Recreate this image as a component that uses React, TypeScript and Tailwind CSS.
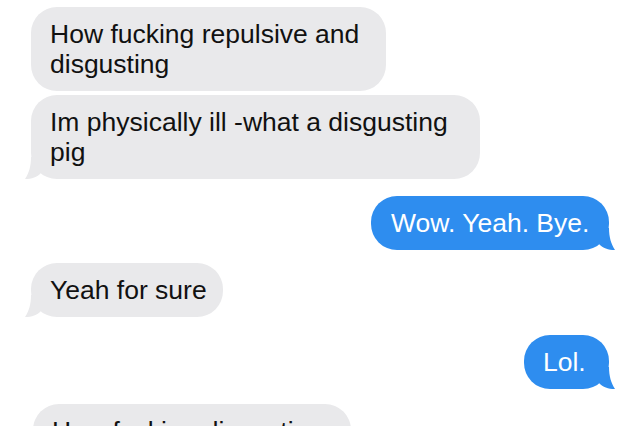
import type { ReactNode } from "react";

// ── Tail ────────────────────────────────────────────────────────────────────
function Tail({ color, side }: { color: string; side: "left" | "right" }) {
  return (
    <svg
      width="20"
      height="22"
      viewBox="0 0 20 22"
      className={
        side === "left"
          ? "absolute -left-[6px] bottom-0"
          : "absolute -right-[6px] bottom-0 -scale-x-100"
      }
    >
      <path d="M6 0 C6 9 4 16 0 22 C7 22 12 20 16 16 L16 0 Z" fill={color} />
    </svg>
  );
}

// ── Bubble ──────────────────────────────────────────────────────────────────
function Bubble({
  children,
  mine,
  tail = true,
  className = "",
}: {
  children: ReactNode;
  mine?: boolean;
  tail?: boolean;
  className?: string;
}) {
  return (
    <div
      className={
        "relative rounded-[26px] pt-[12px] pb-[12px] pl-[19px] pr-[20px] leading-[30px] whitespace-nowrap " +
        (mine ? "self-end bg-[#2e8def] text-white " : "self-start bg-[#e9e9eb] text-[#111111] ") +
        className
      }
    >
      {tail && <Tail color={mine ? "#2e8def" : "#e9e9eb"} side={mine ? "right" : "left"} />}
      <span className="relative">{children}</span>
    </div>
  );
}

export default function App() {
  return (
    <div
      className="w-[640px] h-[426px] overflow-hidden bg-white flex flex-col px-[31px] pt-[7px] text-[26.5px]"
      style={{ fontFamily: '"Liberation Sans", Arial, sans-serif' }}
    >
      <Bubble tail={false} className="w-[355px]">
        How fucking repulsive and
        <br />
        disgusting
      </Bubble>
      <Bubble className="w-[449px] mt-[4px]">
        Im physically ill -what a disgusting
        <br />
        pig
      </Bubble>

      <Bubble mine className="mt-[17px] w-[238px] pl-[20px]">
        Wow. Yeah. Bye.
      </Bubble>

      <Bubble className="mt-[13px] w-[192px]">Yeah for sure</Bubble>

      <Bubble mine className="mt-[18px] w-[85px]">
        Lol.
      </Bubble>

      <Bubble tail={false} className="mt-[15px] ml-[2px] w-[318px] shrink-0">
        How fucking disgusting
      </Bubble>
    </div>
  );
}
